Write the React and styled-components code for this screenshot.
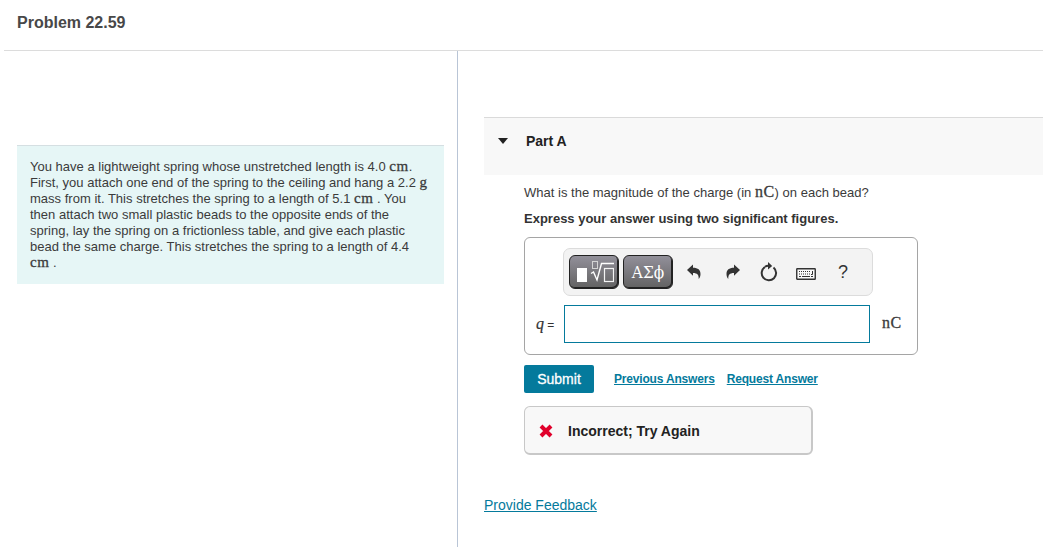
import React from "react";
import styled, { createGlobalStyle } from "styled-components";

const GlobalStyle = createGlobalStyle`
  * {
    box-sizing: border-box;
  }

  body {
    margin: 0;
    background-color: #fff;
    color: #3b3b3b;
    font-family: "Liberation Sans", Arial, sans-serif;
    font-size: 13px;
    overflow: hidden;
  }
`;

const Page = styled.div`
  height: 547px;
  display: flex;
  flex-direction: column;
`;

const Header = styled.header`
  height: 51px;
  margin-left: 4px;
  padding: 13px 13px 0;
  border-bottom: 1px solid #dcdcdc;
`;

const Title = styled.h1`
  margin: 0;
  font-size: 16px;
  line-height: 19px;
  color: #484848;
`;

const Columns = styled.div`
  flex: 1;
  display: flex;
`;

const Left = styled.section`
  width: 458px;
  padding: 94px 13px 0 17px;
  border-right: 1px solid #b9c5d6;
`;

const Statement = styled.div`
  height: 139px;
  padding: 13px 0 0 13px;
  background-color: #e6f6f6;
  border-top: 1px solid #d5dfe2;
  line-height: 16px;
  white-space: nowrap;
`;

const Line = styled.div`
  height: 16px;
  font-size: 13px;
  letter-spacing: 0.01px;
`;

const Unit = styled.span`
  font-family: "Liberation Serif", serif;
  font-size: ${(props) => props.size || "15px"};
  line-height: 1px;
  letter-spacing: 0.5px;
  -webkit-text-stroke: 0.3px currentColor;
`;

const AnswerUnit = styled(Unit)`
  margin-bottom: 4px;
`;

const Right = styled.section`
  flex: 1;
  padding: 66px 0 0 26px;
`;

const PartHeader = styled.div`
  height: 58px;
  padding: 15px 0 0 14px;
  display: flex;
  align-items: flex-start;
  background-color: #f8f8f8;
  border-top: 1px solid #dadada;
  color: #222;
`;

const Caret = styled.span`
  width: 0;
  margin: 5px 18px 0 0;
  border: 5px solid transparent;
  border-width: 6px 5.5px 0;
  border-top-color: #222;
`;

const PartTitle = styled.h2`
  margin: 0;
  font-size: 14px;
  line-height: 16px;
`;

const PartBody = styled.div`
  padding: 10px 0 0 40px;
`;

const Question = styled.div`
  height: 16px;
  line-height: 16px;
  letter-spacing: 0.01px;
  white-space: nowrap;
`;

const Instruction = styled.div`
  margin-top: 10px;
  line-height: 16px;
  font-weight: bold;
  color: #333;
`;

const AnswerBox = styled.div`
  width: 394px;
  height: 118px;
  margin-top: 10px;
  padding: 10px 0 0 38px;
  border: 1px solid #a5a5a5;
  border-radius: 6px;
`;

const Toolbar = styled.div`
  width: 310px;
  height: 48px;
  padding-left: 5px;
  display: flex;
  align-items: center;
  background-color: #f3f3f3;
  border: 1px solid #dcdcdc;
  border-radius: 7px;
`;

const MathButton = styled.button`
  width: 50px;
  height: 34px;
  margin-right: 4px;
  padding: 0;
  display: flex;
  align-items: center;
  justify-content: center;
  color: #fff;
  background: linear-gradient(#92909a, #626262);
  border: 1px solid #222;
  border-radius: 6px;
  box-shadow: inset -1px -1px 0 #222;
`;

const Greek = styled.span`
  font-family: "DejaVu Serif Condensed", "DejaVu Serif", serif;
  font-size: 17px;
  line-height: 20px;
`;

const ToolIcon = styled.svg`
  width: 20px;
  height: 20px;
  flex: none;
  margin-left: ${(props) => props.$gap};
`;

const Help = styled.span`
  margin-left: 22px;
  font-size: 18px;
  line-height: 20px;
  color: #333;
`;

const InputRow = styled.div`
  margin: 9px 0 0 -27px;
  display: flex;
  align-items: center;
`;

const Variable = styled.label`
  width: 28px;
  font-size: 12px;
  color: #333;

  i {
    font-family: "Liberation Serif", serif;
    font-size: 16px;
    -webkit-text-stroke: 0.2px currentColor;
  }
`;

const Input = styled.input`
  width: 306px;
  height: 38px;
  margin-right: 12px;
  border: 1px solid #047a9c;
  background-color: #fff;
  outline: none;
`;

const Actions = styled.div`
  margin-top: 10px;
  display: flex;
  align-items: center;
`;

const Submit = styled.button`
  width: 70px;
  height: 28px;
  margin-right: 20px;
  padding: 0;
  color: #fff;
  background-color: #047a9c;
  border: none;
  border-radius: 2px;
  font: 14px "Liberation Sans", Arial, sans-serif;
  -webkit-text-stroke: 0.3px #fff;
`;

const ActionLink = styled.a`
  margin-right: 12px;
  color: #047a9c;
  font-size: 12px;
  font-weight: bold;
  letter-spacing: -0.18px;
  line-height: 16px;
  text-decoration: underline;
`;

const Feedback = styled.div`
  width: 289px;
  height: 49px;
  margin-top: 13px;
  padding: 2px 0 0 14px;
  display: flex;
  align-items: center;
  background-color: #f8f8f8;
  border: 1px solid #c8c8c8;
  border-right-width: 2px;
  border-bottom-width: 2px;
  border-radius: 6px;
  color: #222;
  font-size: 14px;
  font-weight: bold;

  svg {
    margin-right: 15px;
  }
`;

const ProvideFeedback = styled.a`
  display: inline-block;
  margin-top: 41px;
  color: #047a9c;
  font-size: 14px;
  line-height: 18px;
  text-decoration: underline;
`;

const TemplateIcon = () => (
  <svg width="40" height="30" viewBox="0 0 40 30" fill="none">
    <rect x="3" y="11" width="10" height="14" fill="#fff" />
    <rect x="18.5" y="4.5" width="5" height="7" stroke="#d4d4d4" />
    <path d="M17 16.5l2.5-1.5 3.5 8 4.5-16.5H40" stroke="#fff" strokeWidth="1.4" />
    <rect x="30.5" y="11.5" width="9" height="13" stroke="#f4f4f4" strokeWidth="1.2" />
  </svg>
);

const UndoIcon = ({ gap, flip }) => (
  <ToolIcon $gap={gap} viewBox="0 0 20 20">
    <path
      transform={flip ? "matrix(-1 0 0 1 20 0)" : undefined}
      d="M3 8L9 2.5v3.2c5 0 7.5 2.2 7.5 6.3 0 2-.6 3.6-1.8 5 .2-4-1.2-6-5.7-6v2.8z"
      fill="#333"
    />
  </ToolIcon>
);

const ResetIcon = () => (
  <ToolIcon $gap="16px" viewBox="0 0 20 20">
    <path d="M14.5 5.5A7.2 7.2 0 1 1 6 5" fill="none" stroke="#333" strokeWidth="2" />
    <path d="M6 4.8Q8 3.4 10 3.8" fill="none" stroke="#333" strokeWidth="2" />
    <path d="M9 0L13.2 4 9 7.5z" fill="#333" />
  </ToolIcon>
);

const KeyboardIcon = () => (
  <ToolIcon $gap="17px" viewBox="0 0 20 20">
    <rect x="0.75" y="6.75" width="18.5" height="10.5" rx="0.5" fill="#fafafa" stroke="#333" strokeWidth="1.4" />
    <path d="M3 9.5h12M3 12h12" stroke="#333" strokeDasharray="1 1" />
    <path d="M3 14.5h2M6 14.5h8M15 14.5h2M16.5 9v3.5H15" fill="none" stroke="#333" />
  </ToolIcon>
);

const App = () => {
  return (
    <Page>
      <GlobalStyle />
      <Header>
        <Title>Problem 22.59</Title>
      </Header>
      <Columns>
        <Left>
          <Statement>
            <Line>You have a lightweight spring whose unstretched length is 4.0 <Unit>cm</Unit>.</Line>
            <Line>First, you attach one end of the spring to the ceiling and hang a 2.2 <Unit>g</Unit></Line>
            <Line>mass from it. This stretches the spring to a length of 5.1 <Unit>cm</Unit> . You</Line>
            <Line>then attach two small plastic beads to the opposite ends of the</Line>
            <Line>spring, lay the spring on a frictionless table, and give each plastic</Line>
            <Line>bead the same charge. This stretches the spring to a length of 4.4</Line>
            <Line><Unit>cm</Unit> .</Line>
          </Statement>
        </Left>
        <Right>
          <PartHeader>
            <Caret />
            <PartTitle>Part A</PartTitle>
          </PartHeader>
          <PartBody>
            <Question>
              What is the magnitude of the charge (in <Unit size="16px">nC</Unit>) on each bead?
            </Question>
            <Instruction>Express your answer using two significant figures.</Instruction>
            <AnswerBox>
              <Toolbar>
                <MathButton>
                  <TemplateIcon />
                </MathButton>
                <MathButton>
                  <Greek>ΑΣϕ</Greek>
                </MathButton>
                <UndoIcon gap="7px" />
                <UndoIcon gap="19px" flip />
                <ResetIcon />
                <KeyboardIcon />
                <Help>?</Help>
              </Toolbar>
              <InputRow>
                <Variable>
                  <i>q</i> =
                </Variable>
                <Input />
                <AnswerUnit size="16px">nC</AnswerUnit>
              </InputRow>
            </AnswerBox>
            <Actions>
              <Submit>Submit</Submit>
              <ActionLink>Previous Answers</ActionLink>
              <ActionLink>Request Answer</ActionLink>
            </Actions>
            <Feedback>
              <svg width="14" height="14" viewBox="0 0 14 14">
                <path d="M2 2l10 10M12 2L2 12" stroke="#e0002b" strokeWidth="4" />
              </svg>
              Incorrect; Try Again
            </Feedback>
          </PartBody>
          <ProvideFeedback>Provide Feedback</ProvideFeedback>
        </Right>
      </Columns>
    </Page>
  );
};

export default App;
